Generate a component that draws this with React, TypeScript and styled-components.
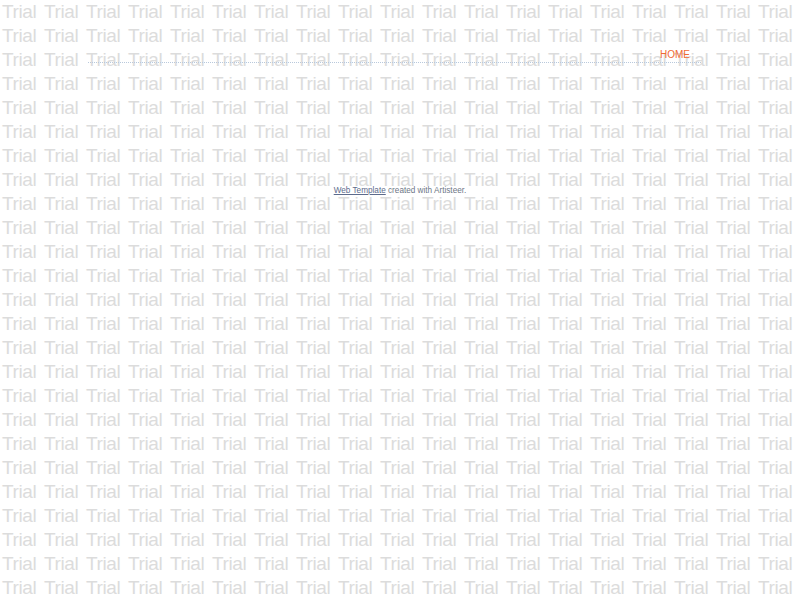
import React from "react";
import styled, { createGlobalStyle } from "styled-components";

const Global = createGlobalStyle`
  html, body { margin: 0; padding: 0; background: #ffffff; }
  body { width: 800px; height: 600px; overflow: hidden; font-family: "Liberation Sans", Arial, sans-serif; }
`;

const Page = styled.div`
  position: relative;
  width: 800px;
  height: 600px;
  overflow: hidden;
`;

const Watermark = styled.div`
  position: absolute;
  inset: 0;
  z-index: 0;
  display: grid;
  grid-template-columns: repeat(20, 42px);
  grid-auto-rows: 24px;
  pointer-events: none;
  user-select: none;
`;

const Mark = styled.span`
  display: block;
  padding-left: 2px;
  font-family: "Liberation Sans", Arial, sans-serif;
  font-size: 19px;
  letter-spacing: -0.4px;
  line-height: 24px;
  color: #dcdcdc;
  white-space: nowrap;
`;

const Content = styled.div`
  position: relative;
  z-index: 1;
  display: flex;
  flex-direction: column;
`;

const NavBar = styled.nav`
  margin: 0 99px 0 88px;
  height: 63px;
  box-sizing: border-box;
  display: flex;
  align-items: flex-end;
  justify-content: flex-end;
  padding: 0 11px 1px 0;
  border-bottom: 1px dotted #b9c9dc;
`;

const NavLink = styled.a`
  font-family: "Liberation Sans", Arial, sans-serif;
  font-size: 10px;
  line-height: 12px;
  color: #f06a34;
  text-decoration: none;
  text-transform: uppercase;
`;

const Footer = styled.footer`
  margin-top: 123px;
  text-align: center;
  font-family: "Liberation Sans", Arial, sans-serif;
  font-size: 8.2px;
  line-height: 10px;
  color: #6e7686;
`;

const FooterLink = styled.a`
  color: #5d6b8c;
  text-decoration: underline;
`;

export default function App() {
  const cells = Array.from({ length: 20 * 25 }, (_, i) => i);
  return (
    <>
      <Global />
      <Page>
        <Watermark aria-hidden="true">
          {cells.map((i) => (
            <Mark key={i}>Trial</Mark>
          ))}
        </Watermark>
        <Content>
          <NavBar>
            <NavLink href="#">Home</NavLink>
          </NavBar>
          <Footer>
            <FooterLink href="#">Web Template</FooterLink> created with Artisteer.
          </Footer>
        </Content>
      </Page>
    </>
  );
}
